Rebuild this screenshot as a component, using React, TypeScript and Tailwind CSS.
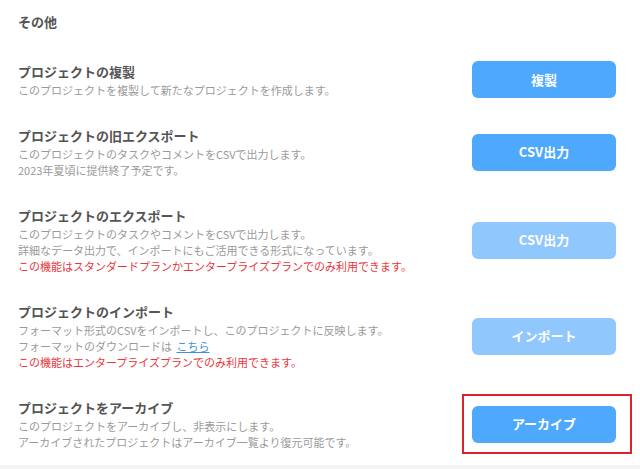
import React from "react";

type Row = {
  title: string;
  lines: React.ReactNode[];
  button: string;
  disabled?: boolean;
  highlight?: boolean;
};

const rows: Row[] = [
  {
    title: "プロジェクトの複製",
    lines: ["このプロジェクトを複製して新たなプロジェクトを作成します。"],
    button: "複製",
  },
  {
    title: "プロジェクトの旧エクスポート",
    lines: ["このプロジェクトのタスクやコメントをCSVで出力します。", "2023年夏頃に提供終了予定です。"],
    button: "CSV出力",
  },
  {
    title: "プロジェクトのエクスポート",
    lines: [
      "このプロジェクトのタスクやコメントをCSVで出力します。",
      "詳細なデータ出力で、インポートにもご活用できる形式になっています。",
      <span className="text-[#e8383d]">この機能はスタンダードプランかエンタープライズプランでのみ利用できます。</span>,
    ],
    button: "CSV出力",
    disabled: true,
  },
  {
    title: "プロジェクトのインポート",
    lines: [
      "フォーマット形式のCSVをインポートし、このプロジェクトに反映します。",
      <span>
        フォーマットのダウンロードは <a className="text-[#3d8fe0] underline ml-[2px]">こちら</a>
      </span>,
      <span className="text-[#e8383d]">この機能はエンタープライズプランでのみ利用できます。</span>,
    ],
    button: "インポート",
    disabled: true,
  },
  {
    title: "プロジェクトをアーカイブ",
    lines: ["このプロジェクトをアーカイブし、非表示にします。", "アーカイブされたプロジェクトはアーカイブ一覧より復元可能です。"],
    button: "アーカイブ",
    highlight: true,
  },
];

export default function App() {
  return (
    <div
      className="w-[640px] h-[469px] bg-[#f4f4f4] overflow-hidden"
      style={{ fontFamily: '"Noto Sans CJK JP", "Noto Sans", sans-serif' }}
    >
      <div className="h-[465px] bg-white pl-[18px] pr-[24px] pt-[12px]">
        <div className="text-[13px] leading-[20px] font-bold text-[#555]">その他</div>
        <div className="mt-[29px] flex flex-col gap-[28px]">
          {rows.map((r, i) => (
            <div key={i} className="flex items-center justify-between">
              <div>
                <div className="text-[13px] leading-[20px] font-bold text-[#555]">{r.title}</div>
                {r.lines.map((l, j) => (
                  <div key={j} className="text-[11px] leading-[16px] text-[#9a9a9a] whitespace-nowrap">
                    {l}
                  </div>
                ))}
              </div>
              <div className="relative">
                {r.highlight && (
                  <div className="absolute left-[-10px] right-[-16px] top-[-12px] bottom-[-11px] border-2 border-[#d6262b]" />
                )}
                <button
                  className={`w-[144px] h-[37px] rounded-[6px] text-white text-[13px] font-bold flex items-center justify-center ${
                    r.disabled ? "bg-[#90c7fd]" : "bg-[#4ea9fd]"
                  }`}
                >
                  {r.button}
                </button>
              </div>
            </div>
          ))}
        </div>
      </div>
    </div>
  );
}
